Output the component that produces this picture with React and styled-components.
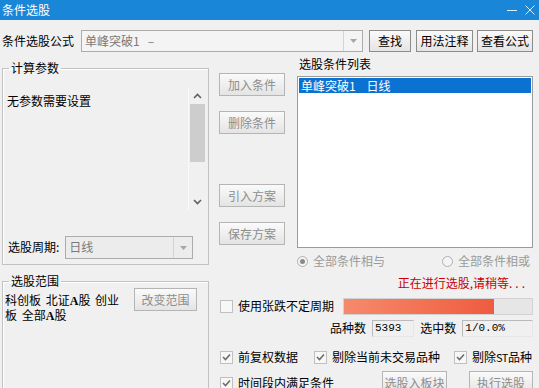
import React from 'react';
import styled, { createGlobalStyle } from 'styled-components';

const font = '"Noto Sans CJK SC", "Microsoft YaHei", sans-serif';

const GlobalStyle = createGlobalStyle`
  html, body {
    margin: 0;
    padding: 0;
    background: #f0f0f0;
    overflow: hidden;
  }
  body {
    font: 12px/1.2 ${font};
    color: #000;
  }
`;

const Window = styled.div`
  width: 539px;
  height: 388px;
  background: #f0f0f0;
  overflow: hidden;
`;

const TitleBar = styled.div`
  height: 20px;
  background: #1a86d8;
  color: #fff;
  display: flex;
  align-items: center;
  justify-content: space-between;
  padding: 0 4px 0 2px;
  font-size: 12px;
`;

const TitleButtons = styled.div`
  display: flex;
  gap: 8px;
  align-items: center;
`;

const Body = styled.div`
  padding: 10px 0 0 2px;
`;

const FormulaRow = styled.div`
  display: flex;
  align-items: center;
  height: 22px;
`;

const Label = styled.span`
  color: ${p => (p.$muted ? '#6d6d6d' : '#000')};
  white-space: nowrap;
  margin-left: ${p => p.$ml || 0}px;
`;

const Combo = styled.div`
  box-sizing: border-box;
  width: ${p => p.$w}px;
  height: ${p => p.$h || 22}px;
  margin-left: ${p => p.$ml || 0}px;
  border: 1px solid #acacac;
  background: ${p => (p.$dim ? '#ececec' : '#f4f4f4')};
  display: flex;
  align-items: stretch;
  color: #7a7a7a;
`;

const ComboText = styled.div`
  flex: 1;
  display: flex;
  align-items: center;
  padding-left: 3px;
  white-space: pre;
`;

const ComboArrow = styled.div`
  width: 18px;
  border-left: 1px solid #d4d4d4;
  display: flex;
  align-items: center;
  justify-content: center;
`;

const Btn = styled.button`
  box-sizing: border-box;
  width: ${p => p.$w}px;
  height: ${p => p.$h || 23}px;
  margin-left: ${p => p.$ml || 0}px;
  margin-top: ${p => p.$mt || 0}px;
  padding: 0;
  font: 12px/1 ${font};
  color: ${p => (p.disabled ? '#8d8d8d' : '#000')};
  border: 1px solid ${p => (p.disabled ? '#b5b5b5' : '#8c8c8c')};
  background: linear-gradient(#fafafa, #e4e4e4);
  flex-shrink: 0;
`;

const Main = styled.div`
  display: flex;
  align-items: flex-start;
  margin-top: 4px;
`;

const LeftCol = styled.div`
  width: 207px;
  display: flex;
  flex-direction: column;
`;

const Group = styled.fieldset`
  margin: ${p => p.$mt || 0}px 0 0 0;
  padding: 0 2px ${p => p.$pb || 0}px 2px;
  border: 1px solid #c2c2c2;
  box-shadow: inset 1px 1px 0 #fff;
  min-width: 0;
`;

const Legend = styled.legend`
  padding: 0 2px;
  margin-left: 4px;
  line-height: 12px;
  font-size: 12px;
`;

const ParamArea = styled.div`
  display: flex;
  height: 122px;
  margin-top: 14px;
`;

const ParamText = styled.div`
  flex: 1;
  padding: 6px 0 0 2px;
`;

const ScrollBar = styled.div`
  width: 16px;
  margin-right: 1px;
  border-left: 1px solid #fafafa;
  display: flex;
  flex-direction: column;
  align-items: center;
`;

const ScrollArrow = styled.div`
  height: 16px;
  display: flex;
  align-items: center;
  justify-content: center;
`;

const ScrollThumb = styled.div`
  width: 15px;
  height: 58px;
  background: #cdcdcd;
`;

const ScrollSpace = styled.div`
  flex: 1;
`;

const PeriodRow = styled.div`
  display: flex;
  align-items: center;
  margin-top: 26px;
  padding-left: 3px;
`;

const ScopeRow = styled.div`
  display: flex;
  align-items: flex-start;
  height: 140px;
`;

const ScopeText = styled.div`
  width: 124px;
  line-height: 13px;
  margin-top: 6px;
  word-spacing: 2px;
  word-break: break-all;
`;

const Bold = styled.span`
  font-family: "Liberation Serif", serif;
  font-weight: bold;
`;

const RightArea = styled.div`
  margin-left: 10px;
  width: 314px;
  display: flex;
  flex-direction: column;
`;

const TopRow = styled.div`
  display: flex;
`;

const ButtonCol = styled.div`
  width: 66px;
  display: flex;
  flex-direction: column;
`;

const ListCol = styled.div`
  margin-left: 12px;
  width: 236px;
`;

const ListTitle = styled.div`
  height: 14px;
  padding-left: 2px;
  margin-top: 1px;
`;

const ListBox = styled.div`
  box-sizing: border-box;
  margin-top: 5px;
  height: 172px;
  border: 1px solid #9b9b9b;
  background: #fff;
  padding: 1px;
`;

const ListItem = styled.div`
  height: 15px;
  line-height: 15px;
  background: ${p => (p.$selected ? '#0c72d2' : 'transparent')};
  color: ${p => (p.$selected ? '#fff' : '#000')};
  padding-left: 2px;
  white-space: pre;
`;

const RadioRow = styled.div`
  display: flex;
  align-items: center;
  height: 14px;
  margin-top: 6px;
  padding-left: 78px;
  color: #9a9a9a;
`;

const Radio = styled.span`
  box-sizing: border-box;
  width: 11px;
  height: 11px;
  border-radius: 50%;
  border: 1px solid #b0b0b0;
  background: #f4f4f4;
  display: inline-flex;
  align-items: center;
  justify-content: center;
  margin-left: ${p => p.$ml || 0}px;
  margin-right: 5px;
  &::after {
    content: '';
    width: 5px;
    height: 5px;
    border-radius: 50%;
    background: ${p => (p.$on ? '#8a8a8a' : 'transparent')};
  }
`;

const Status = styled.div`
  text-align: right;
  color: #c80000;
  margin-top: 8px;
  padding-right: 5px;
  height: 14px;
  line-height: 14px;
`;

const Dots = styled.span`
  letter-spacing: 3px;
`;

const ProgressRow = styled.div`
  display: flex;
  align-items: center;
  height: 17px;
  margin-top: 8px;
  padding-left: 1px;
`;

const Check = styled.span`
  box-sizing: border-box;
  width: 13px;
  height: 13px;
  border: 1px solid #c0c0c0;
  background: #f7f7f7;
  display: inline-flex;
  align-items: center;
  justify-content: center;
  margin-left: ${p => p.$ml || 0}px;
  margin-right: 5px;
  flex-shrink: 0;
`;

const Progress = styled.div`
  box-sizing: border-box;
  width: 191px;
  height: 17px;
  margin-left: 9px;
  background: #e6e6e6;
  border: 1px solid #d2d2d2;
  display: flex;
`;

const ProgressFill = styled.div`
  height: 100%;
  background: linear-gradient(90deg, #f68a6b, #ef5c3f);
`;

const CountRow = styled.div`
  display: flex;
  align-items: center;
  height: 17px;
  margin-top: 5px;
  padding-left: 111px;
`;

const CountBox = styled.div`
  box-sizing: border-box;
  width: ${p => p.$w}px;
  height: 17px;
  margin-left: 6px;
  border: 1px solid #b9b9b9;
  border-right-color: #e6e6e6;
  border-bottom-color: #e6e6e6;
  font: 11px/15px "Liberation Mono", monospace;
  padding-left: 2px;
`;

const CheckRow = styled.div`
  display: flex;
  align-items: center;
  height: 14px;
  margin-top: ${p => p.$mt || 0}px;
  padding-left: 1px;
`;

const Narrow = styled.span`
  font-size: 11px;
  letter-spacing: -0.5px;
`;

const LastRow = styled.div`
  display: flex;
  align-items: flex-start;
  margin-top: 7px;
  padding-left: 1px;
`;

const LastCheck = styled.div`
  display: flex;
  align-items: center;
  margin-top: 5px;
  width: 162px;
`;

const Tick = () => (
  <svg width="9" height="8" viewBox="0 0 9 8">
    <path d="M1 4 L3.5 6.5 L8 1.5" fill="none" stroke="#6c6c6c" strokeWidth="1.6" />
  </svg>
);

const DownTri = () => (
  <svg width="7" height="4" viewBox="0 0 7 4">
    <path d="M0 0 H7 L3.5 4 Z" fill="#a6a6a6" />
  </svg>
);

const Chevron = ({ up }) => (
  <svg width="9" height="6" viewBox="0 0 9 6">
    <path d={up ? 'M1 5 L4.5 1.5 L8 5' : 'M1 1 L4.5 4.5 L8 1'} fill="none" stroke="#606060" strokeWidth="1.6" />
  </svg>
);

export default function App() {
  return (
    <Window>
      <GlobalStyle />
      <TitleBar>
        <span>条件选股</span>
        <TitleButtons>
          <svg width="10" height="10" viewBox="0 0 10 10">
            <path d="M0 5.5 H10" stroke="#d8ecfb" strokeWidth="1" />
          </svg>
          <svg width="10" height="10" viewBox="0 0 10 10">
            <path d="M0.5 0.5 L9.5 9.5 M9.5 0.5 L0.5 9.5" stroke="#d8ecfb" strokeWidth="1" />
          </svg>
        </TitleButtons>
      </TitleBar>

      <Body>
        <FormulaRow>
          <Label>条件选股公式</Label>
          <Combo $w={282} $ml={7}>
            <ComboText>{'单峰突破1   –'}</ComboText>
            <ComboArrow><DownTri /></ComboArrow>
          </Combo>
          <Btn $w={42} $h={22} $ml={6}>查找</Btn>
          <Btn $w={57} $h={22} $ml={5}>用法注释</Btn>
          <Btn $w={56} $h={22} $ml={4}>查看公式</Btn>
        </FormulaRow>

        <Main>
          <LeftCol>
            <Group $mt={6} $pb={5}>
              <Legend>计算参数</Legend>
              <ParamArea>
                <ParamText>无参数需要设置</ParamText>
                <ScrollBar>
                  <ScrollArrow><Chevron up /></ScrollArrow>
                  <ScrollThumb />
                  <ScrollSpace />
                  <ScrollArrow><Chevron /></ScrollArrow>
                </ScrollBar>
              </ParamArea>
              <PeriodRow>
                <Label>选股周期:</Label>
                <Combo $w={128} $h={23} $ml={6} $dim>
                  <ComboText>日线</ComboText>
                  <ComboArrow><DownTri /></ComboArrow>
                </Combo>
              </PeriodRow>
            </Group>

            <Group $mt={10}>
              <Legend>选股范围</Legend>
              <ScopeRow>
                <ScopeText>
                  科创板 北证<Bold>A</Bold>股 创业板 全部<Bold>A</Bold>股
                </ScopeText>
                <Btn $w={63} $ml={5} $mt={1} disabled>改变范围</Btn>
              </ScopeRow>
            </Group>
          </LeftCol>

          <RightArea>
            <TopRow>
              <ButtonCol>
                <Btn $w={66} $mt={17} disabled>加入条件</Btn>
                <Btn $w={66} $mt={15} disabled>删除条件</Btn>
                <Btn $w={66} $mt={50} disabled>引入方案</Btn>
                <Btn $w={66} $mt={15} disabled>保存方案</Btn>
              </ButtonCol>
              <ListCol>
                <ListTitle>选股条件列表</ListTitle>
                <ListBox>
                  <ListItem $selected>{'单峰突破1    日线'}</ListItem>
                </ListBox>
              </ListCol>
            </TopRow>

            <RadioRow>
              <Radio $on />
              <span>全部条件相与</span>
              <Radio $ml={57} />
              <span>全部条件相或</span>
            </RadioRow>

            <Status>正在进行选股,请稍等<Dots>...</Dots></Status>

            <ProgressRow>
              <Check />
              <Label>使用张跌不定周期</Label>
              <Progress>
                <ProgressFill style={{ width: `${(151 / 189) * 100}%` }} />
              </Progress>
            </ProgressRow>

            <CountRow>
              <Label>品种数</Label>
              <CountBox $w={43}>5393</CountBox>
              <Label $ml={6}>选中数</Label>
              <CountBox $w={72}>1/0.0%</CountBox>
            </CountRow>

            <CheckRow $mt={13}>
              <Check><Tick /></Check>
              <Label>前复权数据</Label>
              <Check $ml={16}><Tick /></Check>
              <Label>剔除当前未交易品种</Label>
              <Check $ml={14}><Tick /></Check>
              <Label>剔除<Narrow>ST</Narrow>品种</Label>
            </CheckRow>

            <LastRow>
              <LastCheck>
                <Check><Tick /></Check>
                <Label>时间段内满足条件</Label>
              </LastCheck>
              <Btn $w={65} $ml={0} disabled>选股入板块</Btn>
              <Btn $w={64} $ml={22} disabled>执行选股</Btn>
            </LastRow>
          </RightArea>
        </Main>
      </Body>
    </Window>
  );
}
